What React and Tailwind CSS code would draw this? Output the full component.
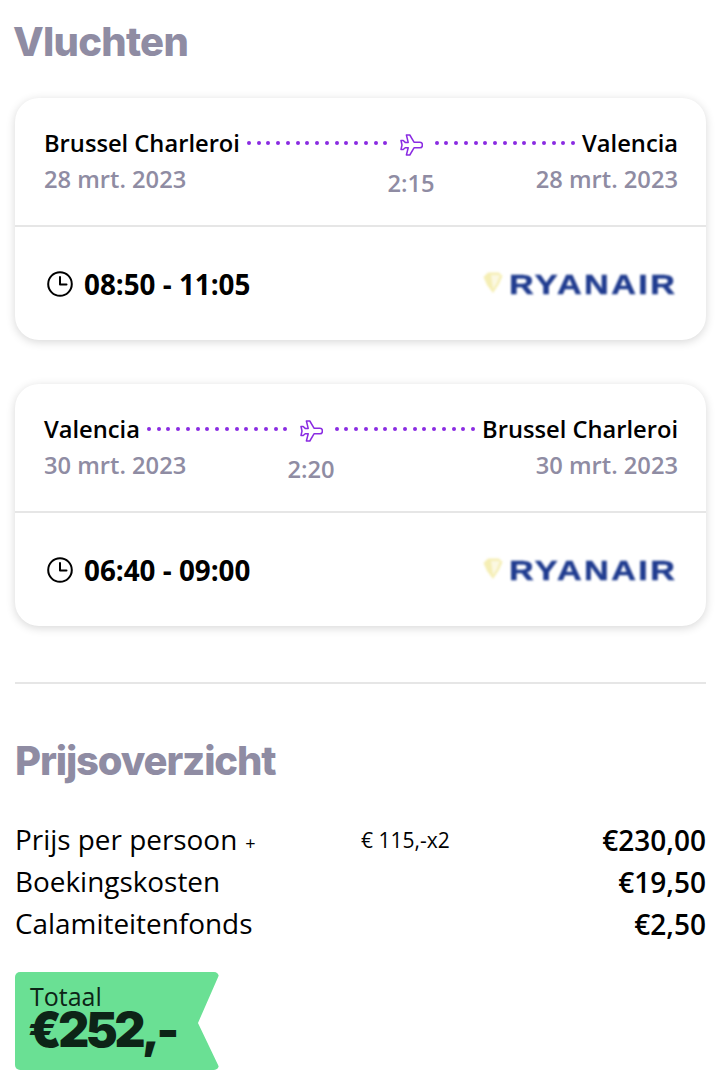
import React from "react";

const OS = "font-['Open_Sans',sans-serif]";

function Dots() {
  return (
    <div className="flex flex-1 items-center justify-between">
      {Array.from({ length: 15 }).map((_, i) => (
        <span key={i} className="h-[4px] w-[4px] rounded-full bg-[#8a2be2]" />
      ))}
    </div>
  );
}

function Plane() {
  return (
    <svg width="23" height="22" viewBox="0 0 23 22" fill="none" stroke="#8a2be2" strokeWidth="1.5" strokeLinejoin="round" className="mt-[3px] shrink-0">
      <path d="M1 6.5h2.2L5.2 8.4H8.2L6.4 1h3.4l4.2 7.2h6c1.5 0 2.4 1.2 2.4 2.8s-.9 2.8-2.4 2.8h-6L9.8 21H6.4l1.8-7.2H5.2L3.2 15.5H1l1-4.5z" />
    </svg>
  );
}

function ClockIcon() {
  return (
    <svg width="26" height="26" viewBox="0 0 26 26" fill="none" stroke="#000" strokeWidth="2" strokeLinecap="round" strokeLinejoin="round" className="shrink-0">
      <circle cx="13" cy="13" r="11.8" />
      <path d="M13 6v7.5h6.5" />
    </svg>
  );
}

function Logo() {
  return (
    <div className="flex items-center blur-[0.8px]">
      <svg width="20" height="22" viewBox="0 0 20 22" className="mr-[6px] mt-[-3px]">
        <path d="M0.5 5 L5 0.5 H16 L19.5 4 L16 12 L10 21 L4 13 Z" fill="#f5eeb4" />
        <path d="M8 3 H17 L14 11 L10 17 Z" fill="#fbf8e2" />
      </svg>
      <div className="w-[169px]">
        <span className="block origin-left font-['Liberation_Sans',sans-serif] text-[28px] font-bold leading-none tracking-[2px] text-[#1f3b8f] [-webkit-text-stroke:0.5px_#1f3b8f] [transform:scaleX(1.22)]">
          RYANAIR
        </span>
      </div>
    </div>
  );
}

function Card({ from, to, date, duration, times }) {
  return (
    <div className="rounded-[24px] bg-white shadow-[0_2px_10px_rgba(0,0,0,0.16)]">
      <div className="h-[129px] border-b-2 border-[#e6e6e6] pl-[29px] pr-[28px] pt-[27px]">
        <div className="flex items-start">
          <div className="shrink-0">
            <div className="whitespace-nowrap text-[23.7px] font-semibold leading-[36px] text-black">{from}</div>
            <div className="w-0 whitespace-nowrap text-[23.7px] font-semibold leading-[36px] text-[#8f8ca3]">{date}</div>
          </div>
          <div className="flex flex-1 flex-col items-center px-[7px]">
            <div className="flex h-[36px] w-full items-center gap-[12px]">
              <Dots />
              <Plane />
              <Dots />
            </div>
            <div className="mt-[5px] text-[23.7px] font-semibold leading-[34px] text-[#8f8ca3]">{duration}</div>
          </div>
          <div className="shrink-0 text-right">
            <div className="whitespace-nowrap text-[23.7px] font-semibold leading-[36px] text-black">{to}</div>
            <div className="ml-auto flex w-0 justify-end">
              <span className="shrink-0 whitespace-nowrap text-[23.7px] font-semibold leading-[36px] text-[#8f8ca3]">{date}</span>
            </div>
          </div>
        </div>
      </div>
      <div className="flex h-[113px] items-center justify-between pl-[32px] pr-[28px] pt-[2px]">
        <div className="flex items-center gap-[11px]">
          <ClockIcon />
          <span className="text-[27.8px] font-bold leading-none text-black">{times}</span>
        </div>
        <Logo />
      </div>
    </div>
  );
}

function Row({ label, extra, mid, amount }) {
  return (
    <div className="grid h-[42px] grid-cols-[346px_1fr_auto] items-center">
      <div className="text-[27.9px] leading-none text-black">
        {label}
        {extra && <span className="ml-[8px] text-[18px]">{extra}</span>}
      </div>
      <div className="text-[21px] leading-none text-black">{mid}</div>
      <div className="text-[28px] font-semibold leading-none text-black">{amount}</div>
    </div>
  );
}

export default function App() {
  return (
    <div className={`${OS} min-h-[1086px] bg-white pl-[15px] pr-[18px] pt-[16px]`}>
      <h2 className="ml-[-2px] font-['Inter',sans-serif] text-[40px] font-extrabold leading-[52px] tracking-[-0.75px] text-[#8f8ca3]">Vluchten</h2>
      <div className="mt-[30px] flex flex-col gap-[44px]">
        <Card from="Brussel Charleroi" to="Valencia" date="28 mrt. 2023" duration="2:15" times="08:50 - 11:05" />
        <Card from="Valencia" to="Brussel Charleroi" date="30 mrt. 2023" duration="2:20" times="06:40 - 09:00" />
      </div>
      <div className="mt-[56px] border-t-2 border-[#e6e6e6]" />
      <h2 className="mt-[51px] font-['Inter',sans-serif] text-[40px] font-extrabold leading-[52px] tracking-[-1.15px] text-[#8f8ca3]">Prijsoverzicht</h2>
      <div className="mt-[32px]">
        <Row label="Prijs per persoon" extra="+" mid="€ 115,-x2" amount="€230,00" />
        <Row label="Boekingskosten" amount="€19,50" />
        <Row label="Calamiteitenfonds" amount="€2,50" />
      </div>
      <div className="mt-[27px] h-[98px] w-[204px] rounded-[5px] bg-[#6ae094] pl-[15px] pt-[9px] text-[#0d2417] [clip-path:polygon(0_0,99%_0,100%_3%,89.7%_52%,100%_97%,99%_100%,0_100%)]">
        <div className="text-[25px] font-medium leading-[30px]">Totaal</div>
        <div className="ml-[-2px] font-['Inter',sans-serif] text-[48px] font-black leading-[38px] tracking-[-3.4px]">€252,-</div>
      </div>
    </div>
  );
}
